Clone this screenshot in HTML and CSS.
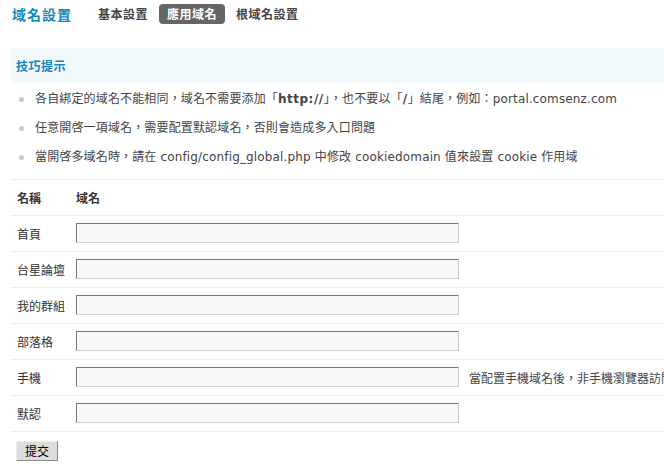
FILE: index.html
```html
<!DOCTYPE html>
<html lang="zh-Hant">
<head>
<meta charset="utf-8">
<title>域名設置</title>
<link rel="stylesheet" href="styles.css">
</head>
<body>
<div class="topbar">
  <h3 class="title">域名設置</h3>
  <ul class="tabs">
    <li class="tab">基本設置</li>
    <li class="tab on">應用域名</li>
    <li class="tab">根域名設置</li>
  </ul>
</div>

<div class="tips">
  <div class="tips-title">技巧提示</div>
  <ul class="tips-list">
    <li>各自綁定的域名不能相同，域名不需要添加「<b class="code">http://</b>」，也不要以「<b class="code">/</b>」結尾，例如：portal.comsenz.com</li>
    <li>任意開啓一項域名，需要配置默認域名，否則會造成多入口問題</li>
    <li>當開啓多域名時，請在 config/config_global.php 中修改 cookiedomain 值來設置 cookie 作用域</li>
  </ul>
</div>

<table class="domains">
  <colgroup>
    <col class="col1">
    <col class="col2">
    <col class="col3">
  </colgroup>
  <tr class="head">
    <th class="c1">名稱</th>
    <th class="c2">域名</th>
    <th class="c3"></th>
  </tr>
  <tr>
    <td class="c1">首頁</td>
    <td class="c2"><input class="txt" type="text"></td>
    <td class="c3"></td>
  </tr>
  <tr>
    <td class="c1">台星論壇</td>
    <td class="c2"><input class="txt" type="text"></td>
    <td class="c3"></td>
  </tr>
  <tr>
    <td class="c1">我的群組</td>
    <td class="c2"><input class="txt" type="text"></td>
    <td class="c3"></td>
  </tr>
  <tr>
    <td class="c1">部落格</td>
    <td class="c2"><input class="txt" type="text"></td>
    <td class="c3"></td>
  </tr>
  <tr>
    <td class="c1">手機</td>
    <td class="c2"><input class="txt" type="text"></td>
    <td class="c3 note">當配置手機域名後，非手機瀏覽器訪問手機域名時將自動跳轉到默認域名</td>
  </tr>
  <tr>
    <td class="c1">默認</td>
    <td class="c2"><input class="txt" type="text"></td>
    <td class="c3"></td>
  </tr>
</table>

<div class="actions">
  <button class="btn" type="button">提交</button>
</div>
</body>
</html>
```

FILE: styles.css
```css
html, body {
  overflow: hidden;
}
body {
  margin: 0;
  font-family: "DejaVu Sans", "Noto Sans CJK TC", sans-serif;
  font-size: 12px;
  color: #333;
  background: #fff;
}
.topbar {
  display: flex;
  align-items: center;
  height: 28px;
  padding-left: 12px;
}
.title {
  margin: 0;
  font-family: "Noto Sans CJK TC", sans-serif;
  font-size: 14px;
  font-weight: bold;
  letter-spacing: 1px;
  color: #1388bd;
  line-height: 20px;
}
.tabs {
  list-style: none;
  margin: 0 0 0 18px;
  padding: 0;
  display: flex;
  gap: 3px;
}
.tab {
  font-family: "Noto Sans CJK TC", sans-serif;
  font-weight: bold;
  letter-spacing: 0.5px;
  line-height: 20px;
  padding: 0 8px;
  color: #444;
  border-radius: 4px;
}
.tab.on {
  background: #666;
  color: #fff;
}
.tips {
  margin: 20px 0 0 11px;
}
.tips-title {
  height: 35px;
  line-height: 35px;
  padding-left: 5px;
  background: #f2f9fd;
  font-family: "Noto Sans CJK TC", sans-serif;
  font-weight: bold;
  letter-spacing: 0.5px;
  color: #1388bd;
}
.tips-list {
  list-style: none;
  margin: 0;
  padding: 2px 0 7px;
  border-bottom: 1px solid #eee;
}
.tips-list li {
  line-height: 29px;
  height: 29px;
  padding-left: 8px;
  color: #444;
  white-space: nowrap;
  letter-spacing: 0.15px;
}
.tips-list li::before {
  content: "";
  display: inline-block;
  width: 5px;
  height: 5px;
  border-radius: 50%;
  background: #c8c8c8;
  margin-right: 11px;
  vertical-align: middle;
}
.code {
  font-weight: bold;
  letter-spacing: 0.5px;
}
.domains {
  margin-left: 11px;
  border-collapse: collapse;
  table-layout: fixed;
  width: 853px;
}
.col1 { width: 60px; }
.col2 { width: 393px; }
.col3 { width: 400px; }
.domains th,
.domains td {
  border-bottom: 1px solid #eee;
  text-align: left;
  padding: 0;
  vertical-align: middle;
  white-space: nowrap;
  overflow: hidden;
}
.domains th {
  height: 35px;
  font-family: "Noto Sans CJK TC", sans-serif;
  font-weight: bold;
  color: #333;
}
.domains .c1 {
  padding-left: 6px;
}
.domains th.c2 {
  padding: 0 5px;
}
.domains td.c2 {
  padding: 7px 5px 8px 5px;
}
.domains .c3 {
  padding-left: 5px;
}
.note {
  color: #444;
}
.txt {
  display: block;
  box-sizing: border-box;
  width: 383px;
  height: 20px;
  margin: 0;
  padding: 0 3px;
  border: 1px solid;
  border-color: #777 #d0d0d0 #d0d0d0 #777;
  background: #f8f8f8;
  font: inherit;
}
.actions {
  margin: 9px 0 0 16px;
}
.btn {
  box-sizing: border-box;
  height: 20px;
  padding: 0 8px;
  margin: 0;
  border: 1px solid;
  border-color: #eee #888 #888 #eee;
  background: #ddd;
  color: #000;
  font-family: "Noto Sans CJK TC", sans-serif;
  font-size: 12px;
  line-height: 18px;
  border-radius: 0;
}
```
